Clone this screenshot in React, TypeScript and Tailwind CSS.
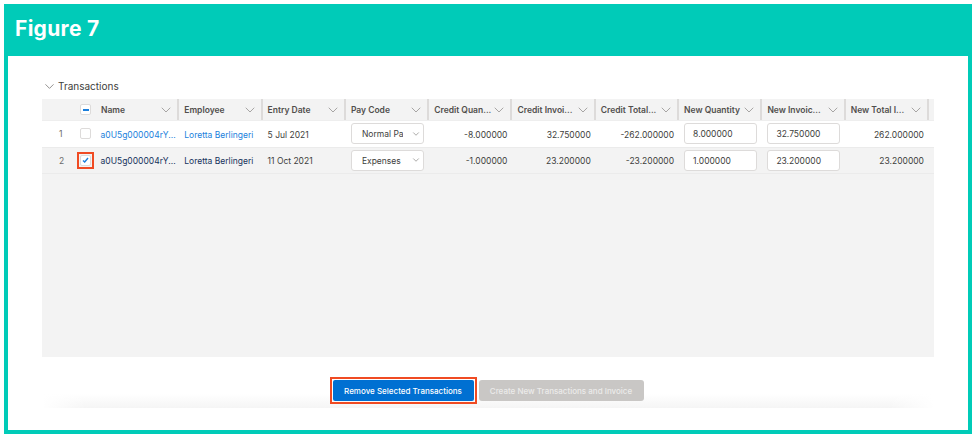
import { ChevronDown } from "lucide-react";

const columns = ["Name", "Employee", "Entry Date", "Pay Code", "Credit Quan...", "Credit Invoi...", "Credit Total...", "New Quantity", "New Invoic...", "New Total I..."];

const rows = [
  { no: 1, checked: false, date: "5 Jul 2021", payCode: "Normal Pay", creditQty: "-8.000000", creditInv: "32.750000", creditTotal: "-262.000000", qty: "8.000000", inv: "32.750000", total: "262.000000" },
  { no: 2, checked: true, date: "11 Oct 2021", payCode: "Expenses", creditQty: "-1.000000", creditInv: "23.200000", creditTotal: "-23.200000", qty: "1.000000", inv: "23.200000", total: "23.200000" },
];

const gridCols = "grid grid-cols-[54px_repeat(10,83.3px)]";

const Cell = ({ children }: { children: React.ReactNode }) => (
  <div className="flex items-center justify-end px-[5px] pt-[3px] text-[8.5px] text-[#3e3e3c]">{children}</div>
);

const BoxInput = ({ value }: { value: string }) => (
  <div className="flex items-center pl-[5px]">
    <div className="flex h-[21px] w-[73px] items-center rounded-[3px] border border-[#dddbda] bg-white pl-[8px] pt-[2px] text-[8.5px] text-[#3e3e3c]">{value}</div>
  </div>
);

const App = () => {
  return (
    <div className="h-[438px] w-[976px] bg-white p-[4px] font-['Inter',sans-serif]">
      <div className="flex h-[430px] flex-col border-x-4 border-b-4 border-[#00cbb8]">
        <div className="-mx-[4px] flex h-[52px] shrink-0 items-center bg-[#00cbb8] pb-[3px] pl-[11px] text-[21px] font-bold tracking-[0.3px] text-white">
          Figure 7
        </div>

        <div className="flex flex-1 flex-col px-[34px] pt-[23px]">
          <div className="flex h-[14px] items-center gap-[1px] text-[10px] text-[#3e3e3c]">
            <ChevronDown size={15} strokeWidth={1.2} className="text-[#706e6b]" />
            Transactions
          </div>

          <div className="mt-[6px] h-[258px] bg-[#f3f3f3]">
            <div className={`${gridCols} h-[22px] border-b border-[#eeeeee]`}>
              <div className="flex items-center pl-[38px]">
                <span className="flex h-[11px] w-[11px] items-center justify-center rounded-[2px] border border-[#dddbda] bg-white">
                  <span className="h-[2px] w-[6px] bg-[#1b7fdc]" />
                </span>
              </div>
              {columns.map((col) => (
                <div key={col} className="flex items-center justify-between border-r-2 border-[#dddbda] pl-[5px] pr-[3px] text-[8.5px] font-semibold text-[#514f4d]">
                  <span className="whitespace-nowrap pt-[2px]">{col}</span>
                  <ChevronDown size={16} strokeWidth={1.1} className="shrink-0 text-[#8a8886]" />
                </div>
              ))}
            </div>

            {rows.map((row) => {
              const linkColor = row.checked ? "text-[#16325c]" : "text-[#1b7fdc]";
              return (
                <div key={row.no} className={`${gridCols} h-[26.5px] border-b border-[#ebebeb] ${row.checked ? "bg-[#f3f3f3]" : "bg-white"}`}>
                  <div className="relative flex items-center text-[8.5px] text-[#6b6b6b]">
                    <span className="w-[38px] pl-[17px] pt-[2px]">{row.no}</span>
                    <span className="relative flex h-[11px] w-[11px] items-center justify-center rounded-[2px] border border-[#dddbda] bg-white">
                      {row.checked && (
                        <>
                          <svg width="7" height="6" viewBox="0 0 7 6" fill="none">
                            <path d="M1 3.4 2.7 5 6 1" stroke="#1b7fdc" strokeWidth="1.4" />
                          </svg>
                          <span className="absolute -inset-[4px] border-2 border-[#f04b23]" />
                        </>
                      )}
                    </span>
                  </div>
                  <div className={`flex items-center pl-[4.5px] pt-[3px] text-[8.5px] ${linkColor}`}>a0U5g000004rY...</div>
                  <div className={`flex items-center pl-[5px] pt-[3px] text-[8.5px] ${linkColor}`}>Loretta Berlingeri</div>
                  <div className="flex items-center pl-[5px] pt-[3px] text-[8.5px] text-[#3e3e3c]">{row.date}</div>
                  <div className="flex items-center pl-[5px]">
                    <div className="flex h-[21px] w-[73px] items-center justify-between rounded-[3px] border border-[#dddbda] bg-white pl-[10px] pr-[2px] text-[8.5px] text-[#3e3e3c]">
                      <span className="w-[41px] overflow-hidden whitespace-nowrap pt-[2px]">{row.payCode}</span>
                      <ChevronDown size={10} strokeWidth={1.4} className="text-[#706e6b]" />
                    </div>
                  </div>
                  <Cell>{row.creditQty}</Cell>
                  <Cell>{row.creditInv}</Cell>
                  <Cell>{row.creditTotal}</Cell>
                  <BoxInput value={row.qty} />
                  <BoxInput value={row.inv} />
                  <Cell>{row.total}</Cell>
                </div>
              );
            })}
          </div>

          <div className="flex h-[51px] items-start justify-center gap-[5px] bg-[linear-gradient(to_right,#ffffff,transparent_5%,transparent_95%,#ffffff),linear-gradient(to_bottom,#ffffff_72%,#f5f5f5)] pt-[23px]">
            <button className="relative h-[21px] w-[141px] rounded-[2px] bg-[#0070d2] text-[8px] font-medium text-white">
              Remove Selected Transactions
              <span className="absolute -inset-[3px] border-2 border-[#f04b23]" />
            </button>
            <button className="h-[21px] w-[165px] rounded-[3px] bg-[#c9c7c5] text-[8px] font-medium text-[#ecebea]">
              Create New Transactions and Invoice
            </button>
          </div>
        </div>
      </div>
    </div>
  );
};

export default App;
